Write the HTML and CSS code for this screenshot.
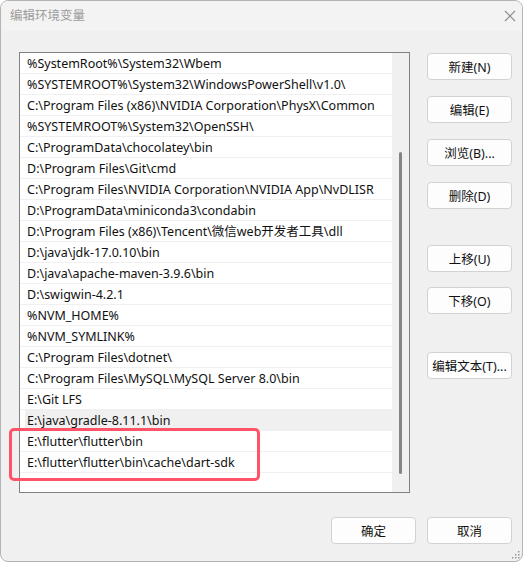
FILE: index.html
```html
<!DOCTYPE html>
<html lang="zh-CN">
<head>
<meta charset="utf-8">
<title>编辑环境变量</title>
<link rel="stylesheet" href="styles.css">
</head>
<body>
<div class="window">
  <div class="titlebar">
    <span class="title">编辑环境变量</span>
    <svg class="close" width="12" height="12" viewBox="0 0 12 12"><path d="M1 1L11 11M11 1L1 11" stroke="#8a8a8a" stroke-width="1.1" fill="none"/></svg>
  </div>
  <div class="content">
    <div class="main">
      <div class="listbox">
        <div class="rows">
          <div class="row">%SystemRoot%\System32\Wbem</div>
          <div class="row">%SYSTEMROOT%\System32\WindowsPowerShell\v1.0\</div>
          <div class="row">C:\Program Files (x86)\NVIDIA Corporation\PhysX\Common</div>
          <div class="row">%SYSTEMROOT%\System32\OpenSSH\</div>
          <div class="row">C:\ProgramData\chocolatey\bin</div>
          <div class="row">D:\Program Files\Git\cmd</div>
          <div class="row">C:\Program Files\NVIDIA Corporation\NVIDIA App\NvDLISR</div>
          <div class="row">D:\ProgramData\miniconda3\condabin</div>
          <div class="row">D:\Program Files (x86)\Tencent\微信web开发者工具\dll</div>
          <div class="row">D:\java\jdk-17.0.10\bin</div>
          <div class="row">D:\java\apache-maven-3.9.6\bin</div>
          <div class="row">D:\swigwin-4.2.1</div>
          <div class="row">%NVM_HOME%</div>
          <div class="row">%NVM_SYMLINK%</div>
          <div class="row">C:\Program Files\dotnet\</div>
          <div class="row">C:\Program Files\MySQL\MySQL Server 8.0\bin</div>
          <div class="row">E:\Git LFS</div>
          <div class="row sel">E:\java\gradle-8.11.1\bin</div>
          <div class="row">E:\flutter\flutter\bin</div>
          <div class="row">E:\flutter\flutter\bin\cache\dart-sdk</div>
        </div>
        <div class="scrollbar"><div class="thumb"></div></div>
      </div>
      <div class="side">
        <button class="btn b-new">新建(N)</button>
        <button class="btn b-edit">编辑(E)</button>
        <button class="btn b-browse">浏览(B)...</button>
        <button class="btn b-del">删除(D)</button>
        <button class="btn b-up">上移(U)</button>
        <button class="btn b-down">下移(O)</button>
        <button class="btn b-text">编辑文本(T)...</button>
      </div>
    </div>
    <div class="footer">
      <button class="btn">确定</button>
      <button class="btn">取消</button>
    </div>
  </div>
  <div class="mark"></div>
  <svg class="grip" width="8" height="8" viewBox="0 0 8 8">
    <rect x="6" y="0" width="1.5" height="1.5" fill="#9a9a9a"/>
    <rect x="3" y="3" width="1.5" height="1.5" fill="#9a9a9a"/>
    <rect x="6" y="3" width="1.5" height="1.5" fill="#9a9a9a"/>
    <rect x="0" y="6" width="1.5" height="1.5" fill="#9a9a9a"/>
    <rect x="3" y="6" width="1.5" height="1.5" fill="#9a9a9a"/>
    <rect x="6" y="6" width="1.5" height="1.5" fill="#9a9a9a"/>
  </svg>
</div>
</body>
</html>
```
FILE: styles.css
```css
* { box-sizing: border-box; }
html, body { margin: 0; padding: 0; }
body {
  background: #ffffff;
  width: 527px;
  height: 563px;
  overflow: hidden;
  font-family: "Noto Sans", "Noto Sans CJK SC", sans-serif;
  font-size: 12px;
  color: #1a1a1a;
}
.window {
  position: relative;
  width: 523px;
  height: 562px;
  border: 1px solid #b4b4b4;
  border-radius: 8px;
  background: #f0f0f0;
  display: flex;
  flex-direction: column;
  overflow: hidden;
}
.titlebar {
  height: 30px;
  flex: none;
  background: #f3f3f3;
  display: flex;
  align-items: center;
  justify-content: space-between;
  padding: 0 6px 3px 9px;
}
.title {
  color: #9c9c9c;
  font-size: 12.5px;
}
.close { margin-top: 3px; }
.content {
  flex: 1;
  display: flex;
  flex-direction: column;
  padding: 21px 10px 0 18px;
}
.main {
  display: flex;
  gap: 17px;
}
.listbox {
  width: 391px;
  height: 441px;
  border: 1px solid #828282;
  background: #ffffff;
  display: flex;
}
.rows {
  width: 372px;
  flex: none;
}
.row {
  height: 21px;
  border-bottom: 1px solid #f0f0f0;
  padding-left: 7px;
  padding-top: 1px;
  line-height: 20px;
  font-size: 12.5px;
  color: #111111;
  white-space: nowrap;
  overflow: hidden;
}
.row.sel {
  background: linear-gradient(to right, #ffffff 5px, #f0f0f0 5px);
}
.scrollbar {
  width: 17px;
  flex: none;
  background: #f0f0f0;
  padding: 99px 0 0 7px;
}
.thumb {
  width: 3px;
  height: 322px;
  background: #858585;
  border-radius: 1.5px;
}
.side {
  display: flex;
  flex-direction: column;
  width: 85px;
  padding-top: 1px;
}
.btn {
  width: 85px;
  height: 27px;
  border: 1px solid #d2d2d2;
  border-radius: 4px;
  background: #fdfdfd;
  font-family: "Noto Sans", "Noto Sans CJK SC", sans-serif;
  font-size: 12.5px;
  color: #111111;
  padding: 0;
}
.b-edit, .b-browse, .b-del { margin-top: 16px; }
.b-up { margin-top: 36px; }
.b-down { margin-top: 15px; }
.b-text { margin-top: 38px; }
.footer {
  display: flex;
  justify-content: flex-end;
  gap: 11px;
  margin-top: 24px;
}
.mark {
  position: absolute;
  left: 8px;
  top: 427px;
  width: 251px;
  height: 53px;
  border: 3px solid #ff5468;
  border-radius: 5px;
}
.grip {
  position: absolute;
  right: 2px;
  bottom: 2px;
}
```
